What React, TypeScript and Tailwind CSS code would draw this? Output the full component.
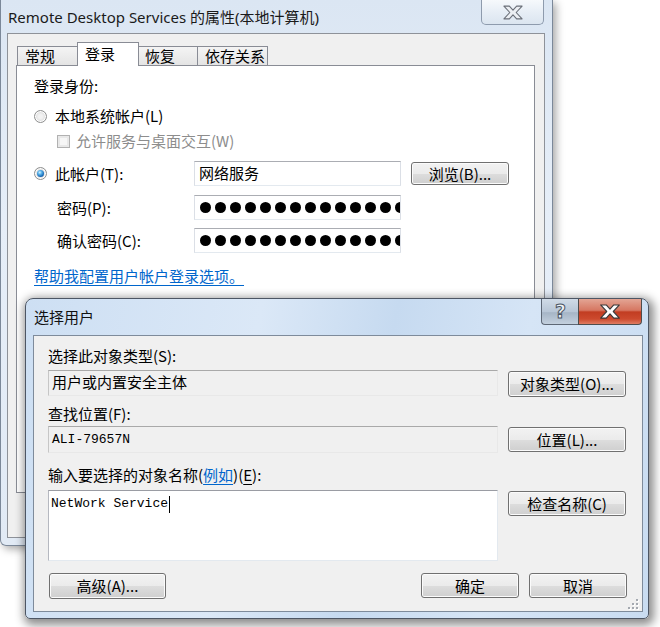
import React from "react";

function Btn({ children, className = "" }: { children: React.ReactNode; className?: string }) {
  return (
    <div
      className={
        "flex items-center justify-center rounded-[3px] border border-[#707070] bg-[linear-gradient(to_bottom,#f2f2f2_0%,#ebebeb_50%,#dddddd_51%,#cfcfcf_100%)] shadow-[inset_0_0_0_1px_#fbfbfb] text-[15px] leading-[20px] text-black " +
        className
      }
    >
      {children}
    </div>
  );
}

function XGlyph({ fill, stroke, w, h }: { fill: string; stroke: string; w: number; h: number }) {
  return (
    <svg width={w} height={h} viewBox="0 0 22 16">
      <polygon
        points="1,1 7,1 11,5.5 15,1 21,1 14.5,8 21,15 15,15 11,10.5 7,15 1,15 7.5,8"
        fill={fill}
        stroke={stroke}
        strokeWidth="1.2"
        strokeLinejoin="round"
      />
    </svg>
  );
}

function Radio({ checked }: { checked?: boolean }) {
  return (
    <div className="relative h-[13px] w-[13px] shrink-0 rounded-full border border-[#8e8f8f] bg-[radial-gradient(circle_at_50%_50%,#f2f2f2_25%,#d8d8d8_75%,#eeeeee_100%)] shadow-[inset_0_0_0_1px_#ffffff]">
      {checked && (
        <div className="absolute inset-[2px] rounded-full bg-[radial-gradient(circle_at_40%_35%,#d8f2ff_0%,#5ab3ea_30%,#1263b0_70%,#0a3d7c_100%)]" />
      )}
    </div>
  );
}

function Dots() {
  const arr = Array.from({ length: 14 });
  return (
    <div className="flex h-full items-center gap-[4px] overflow-hidden pl-[5px]">
      {arr.map((_, i) => (
        <div key={i} className="h-[11px] w-[11px] shrink-0 rounded-full bg-black" />
      ))}
    </div>
  );
}

const inputCls =
  "h-[25px] w-[207px] border border-t-[#abadb3] border-l-[#dbdfe6] border-r-[#dbdfe6] border-b-[#e3e9ef] bg-white";

const roCls =
  "border border-t-[#a9a9a9] border-l-[#c6c6c6] border-r-[#e8e8e8] border-b-[#e8e8e8] bg-[#f0f0f0]";

export default function App() {
  return (
    <div className="relative h-[627px] w-[660px] overflow-hidden bg-white font-['Noto_Sans_CJK_SC',sans-serif] text-[15px] text-black">
      {/* Background properties window */}
      <div className="absolute left-0 top-0 flex h-[546px] w-[553px] flex-col rounded-b-[6px] border-x border-b border-[#7b8899] bg-[linear-gradient(to_bottom,#dbe6f3_0%,#e6eef8_40%,#e1eaf5_100%)] shadow-[3px_3px_8px_rgba(0,0,0,0.35)]">
        <div className="flex h-[33px] shrink-0 items-center pl-[7px] font-['Noto_Sans','Noto_Sans_CJK_SC',sans-serif] text-[15px] leading-[20px] text-[#1a1a1a]">
          Remote Desktop Services 的属性(本地计算机)
        </div>
        <div className="absolute right-[8px] top-0 flex h-[25px] w-[63px] items-center justify-center rounded-b-[5px] border-x border-b border-[#8e9bad] bg-[linear-gradient(to_bottom,#f6f9fc_0%,#e7eef6_50%,#dbe5f0_100%)]">
          <XGlyph fill="#eceff3" stroke="#6a6f78" w={20} h={15} />
        </div>
        <div className="mx-[6px] mb-[7px] mr-[7px] flex flex-1 flex-col border border-[#8e9299] bg-[#f0f0f0]">
          <div className="ml-[8px] mr-[9px] mt-[8px] flex flex-col">
            {/* tabs */}
            <div className="relative z-10 flex h-[24px] items-end pl-[1px] text-[15px] leading-[18px]">
              <div className="mb-[1px] flex h-[19px] w-[60px] items-center border-l border-t border-[#898c95] bg-[linear-gradient(to_bottom,#f4f4f4,#e4e4e4)] pl-[7px]">
                常规
              </div>
              <div className="flex h-[24px] w-[62px] items-start border-x border-t border-[#898c95] bg-white pl-[7px] pt-[2px]">
                登录
              </div>
              <div className="mb-[1px] flex h-[19px] w-[58px] items-center border-t border-[#898c95] bg-[linear-gradient(to_bottom,#f4f4f4,#e4e4e4)] pl-[6px]">
                恢复
              </div>
              <div className="mb-[1px] flex h-[19px] w-[71px] items-center border-x border-t border-[#898c95] bg-[linear-gradient(to_bottom,#f4f4f4,#e4e4e4)] pl-[7px]">
                依存关系
              </div>
            </div>
            {/* panel */}
            <div className="-mt-px flex h-[428px] flex-col border border-[#898c95] bg-white pl-[17px] leading-[20px]">
              <div className="mt-[10px] h-[20px]">登录身份:</div>
              <div className="mt-[10px] flex h-[20px] items-center gap-[8px]">
                <Radio />
                <span>本地系统帐户(L)</span>
              </div>
              <div className="mt-[5px] flex h-[20px] items-center gap-[6px] pl-[23px] text-[#8d8d8d]">
                <div className="h-[13px] w-[13px] border border-[#b1b1b1] bg-[#f6f6f6] shadow-[inset_0_0_0_2px_#e8e8e8]" />
                <span>允许服务与桌面交互(W)</span>
              </div>
              <div className="mt-[10px] flex h-[25px] items-center">
                <div className="flex w-[160px] items-center gap-[8px]">
                  <Radio checked />
                  <span>此帐户(T):</span>
                </div>
                <div className={inputCls + " flex items-start pl-[4px] pt-[1px]"}>网络服务</div>
                <Btn className="ml-[10px] h-[23px] w-[98px]">浏览(B)...</Btn>
              </div>
              <div className="mt-[9px] flex h-[25px] items-center">
                <div className="w-[160px] pl-[23px]">密码(P):</div>
                <div className={inputCls}>
                  <Dots />
                </div>
              </div>
              <div className="mt-[8px] flex h-[25px] items-center">
                <div className="w-[160px] pl-[23px]">确认密码(C):</div>
                <div className={inputCls}>
                  <Dots />
                </div>
              </div>
              <div className="mt-[13px] h-[20px]">
                <span className="text-[#0066cc] underline underline-offset-[3px]">帮助我配置用户帐户登录选项。</span>
              </div>
            </div>
          </div>
        </div>
      </div>

      {/* Foreground dialog */}
      <div className="absolute left-[25px] top-[298px] flex h-[321px] w-[624px] flex-col rounded-t-[8px] rounded-b-[5px] border border-[#4d5664] bg-[linear-gradient(100deg,#cddff3_0%,#dbe8f7_35%,#c6daf0_55%,#d6e5f6_75%,#c9dcf1_100%)] shadow-[2px_3px_10px_3px_rgba(0,0,0,0.45)]">
        <div className="flex h-[36px] shrink-0 items-center pl-[8px] text-[15px] leading-[20px] text-[#111]">选择用户</div>
        <div className="absolute right-[69px] top-0 flex h-[26px] w-[38px] items-center justify-center rounded-bl-[4px] border-y-0 border-b border-l border-[#5d6775] bg-[linear-gradient(to_bottom,#d0dbe7_0%,#b8c6d6_50%,#a6b5c6_55%,#c3d0de_100%)] pb-[2px]">
          <span className="font-['DejaVu_Sans',sans-serif] text-[19px] font-bold leading-[20px] text-[#eef2f6] [-webkit-text-stroke:1px_#4b5563]">?</span>
        </div>
        <div className="absolute right-[6px] top-0 flex h-[26px] w-[64px] items-center justify-center rounded-br-[4px] border-b border-l border-r border-[#4d4d4d] bg-[linear-gradient(to_bottom,#e3a594_0%,#d67762_45%,#c23d22_52%,#cc4a2e_80%,#df7d63_100%)]">
          <XGlyph fill="#ffffff" stroke="#3a3a3a" w={22} h={15} />
        </div>
        <div className="relative mb-[6px] ml-[7px] mr-[5px] flex flex-1 flex-col border border-[#7e8b9b] bg-[#f0f0f0] pl-[14px] pt-[10px] leading-[20px]">
          <div className="h-[20px]">选择此对象类型(S):</div>
          <div className="mt-[4px] flex items-start gap-[10px]">
            <div className={roCls + " h-[26px] w-[450px] pl-[3px] pt-[1px]"}>用户或内置安全主体</div>
            <Btn className="mt-[1px] h-[26px] w-[118px]">对象类型(O)...</Btn>
          </div>
          <div className="mt-[7px] h-[20px]">查找位置(F):</div>
          <div className="mt-[2px] flex items-start gap-[10px]">
            <div className={roCls + " flex h-[27px] w-[450px] items-center pl-[3px] font-['Liberation_Mono',monospace] text-[13px]"}>
              ALI-79657N
            </div>
            <Btn className="mt-[1px] h-[25px] w-[118px]">位置(L)...</Btn>
          </div>
          <div className="mt-[12px] h-[20px]">
            输入要选择的对象名称(<span className="text-[#0066cc] underline underline-offset-[3px]">例如</span>)(<span className="underline underline-offset-[3px]">E</span>):
          </div>
          <div className="mt-[5px] flex items-start gap-[10px]">
            <div className="h-[71px] w-[450px] border border-t-[#9a9ca3] border-l-[#b5b8c0] border-r-[#e3e9ef] border-b-[#e3e9ef] bg-white pl-[2px] pt-[4px]">
              <div className="flex h-[18px] items-center font-['Liberation_Mono',monospace] text-[13px] leading-[18px]">
                NetWork Service
                <span className="ml-px inline-block h-[17px] w-px bg-black" />
              </div>
            </div>
            <Btn className="mt-[1px] h-[25px] w-[118px]">检查名称(C)</Btn>
          </div>
          <div className="mt-[12px] flex items-start">
            <Btn className="ml-px h-[26px] w-[117px]">高级(A)...</Btn>
            <div className="flex-1" />
            <Btn className="h-[25px] w-[98px]">确定</Btn>
            <Btn className="ml-[10px] mr-[15px] h-[25px] w-[98px]">取消</Btn>
          </div>
          <svg className="absolute bottom-[1px] right-[3px]" width="11" height="11" viewBox="0 0 11 11">
            <g fill="#ffffff">
              <rect x="9" y="1" width="2" height="2" />
              <rect x="9" y="5" width="2" height="2" />
              <rect x="5" y="5" width="2" height="2" />
              <rect x="9" y="9" width="2" height="2" />
              <rect x="5" y="9" width="2" height="2" />
              <rect x="1" y="9" width="2" height="2" />
            </g>
            <g fill="#a4a9b0">
              <rect x="8" y="0" width="2" height="2" />
              <rect x="8" y="4" width="2" height="2" />
              <rect x="4" y="4" width="2" height="2" />
              <rect x="8" y="8" width="2" height="2" />
              <rect x="4" y="8" width="2" height="2" />
              <rect x="0" y="8" width="2" height="2" />
            </g>
          </svg>
        </div>
      </div>
    </div>
  );
}
